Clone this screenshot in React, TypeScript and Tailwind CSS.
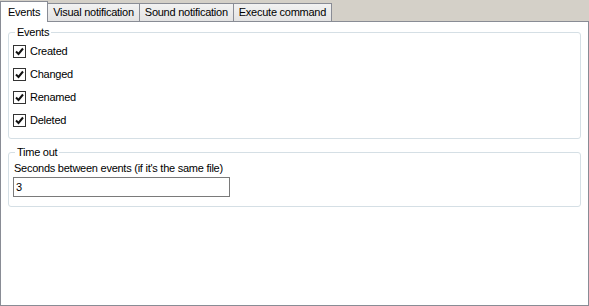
import React from "react";

const tabs = ["Visual notification", "Sound notification", "Execute command"];
const events = ["Created", "Changed", "Renamed", "Deleted"];

function Check({ label }: { label: string }) {
  return (
    <label className="flex h-[23px] items-center gap-[4px]">
      <span className="flex h-[13px] w-[13px] items-center justify-center border border-[#333] bg-white">
        <svg width="9" height="9" viewBox="0 0 9 9">
          <path d="M1 4.5 L3.5 7 L8 1.5" fill="none" stroke="#111" strokeWidth="2" />
        </svg>
      </span>
      <span className="text-black">{label}</span>
    </label>
  );
}

function Group({ title, children, className }: { title: string; children: React.ReactNode; className?: string }) {
  return (
    <fieldset className={"rounded-[3px] border border-[#d5dfe5] px-[4px] " + (className ?? "")}>
      <legend className="ml-[2px] px-[2px] leading-[13px] text-black">{title}</legend>
      {children}
    </fieldset>
  );
}

export default function App() {
  return (
    <div className="flex h-[306px] w-[589px] flex-col bg-[#d4d0c8] font-['Liberation_Sans',Arial,sans-serif] text-[11px] tracking-[-0.25px]">
      <div className="flex h-[21px] items-end">
        <div className="relative z-10 -mb-px flex h-[21px] items-center border border-b-0 border-[#898c95] bg-white px-[7px] text-black">
          Events
        </div>
        {tabs.map((t) => (
          <div
            key={t}
            className="-ml-px flex h-[18px] items-center border border-b-0 border-[#898c95] bg-gradient-to-b from-[#f2f2f2] to-[#e3e3e3] px-[5px] text-black first:ml-[1px]"
          >
            {t}
          </div>
        ))}
      </div>
      <div className="flex flex-1 flex-col gap-[7px] border border-[#898c95] bg-white px-[7px] pt-[4px]">
        <Group title="Events" className="h-[113px] pb-[6px]">
          <div className="flex flex-col pt-[1px]">
            {events.map((e) => (
              <Check key={e} label={e} />
            ))}
          </div>
        </Group>
        <Group title="Time out" className="h-[61px]">
          <div className="flex flex-col pt-[2px]">
            <span className="px-[1px] leading-[14px] text-black">Seconds between events (if it's the same file)</span>
            <div className="mt-[2px] flex h-[20px] w-[217px] items-center border border-[#7a7a7a] bg-white px-[2px] text-black">
              3
            </div>
          </div>
        </Group>
      </div>
    </div>
  );
}
